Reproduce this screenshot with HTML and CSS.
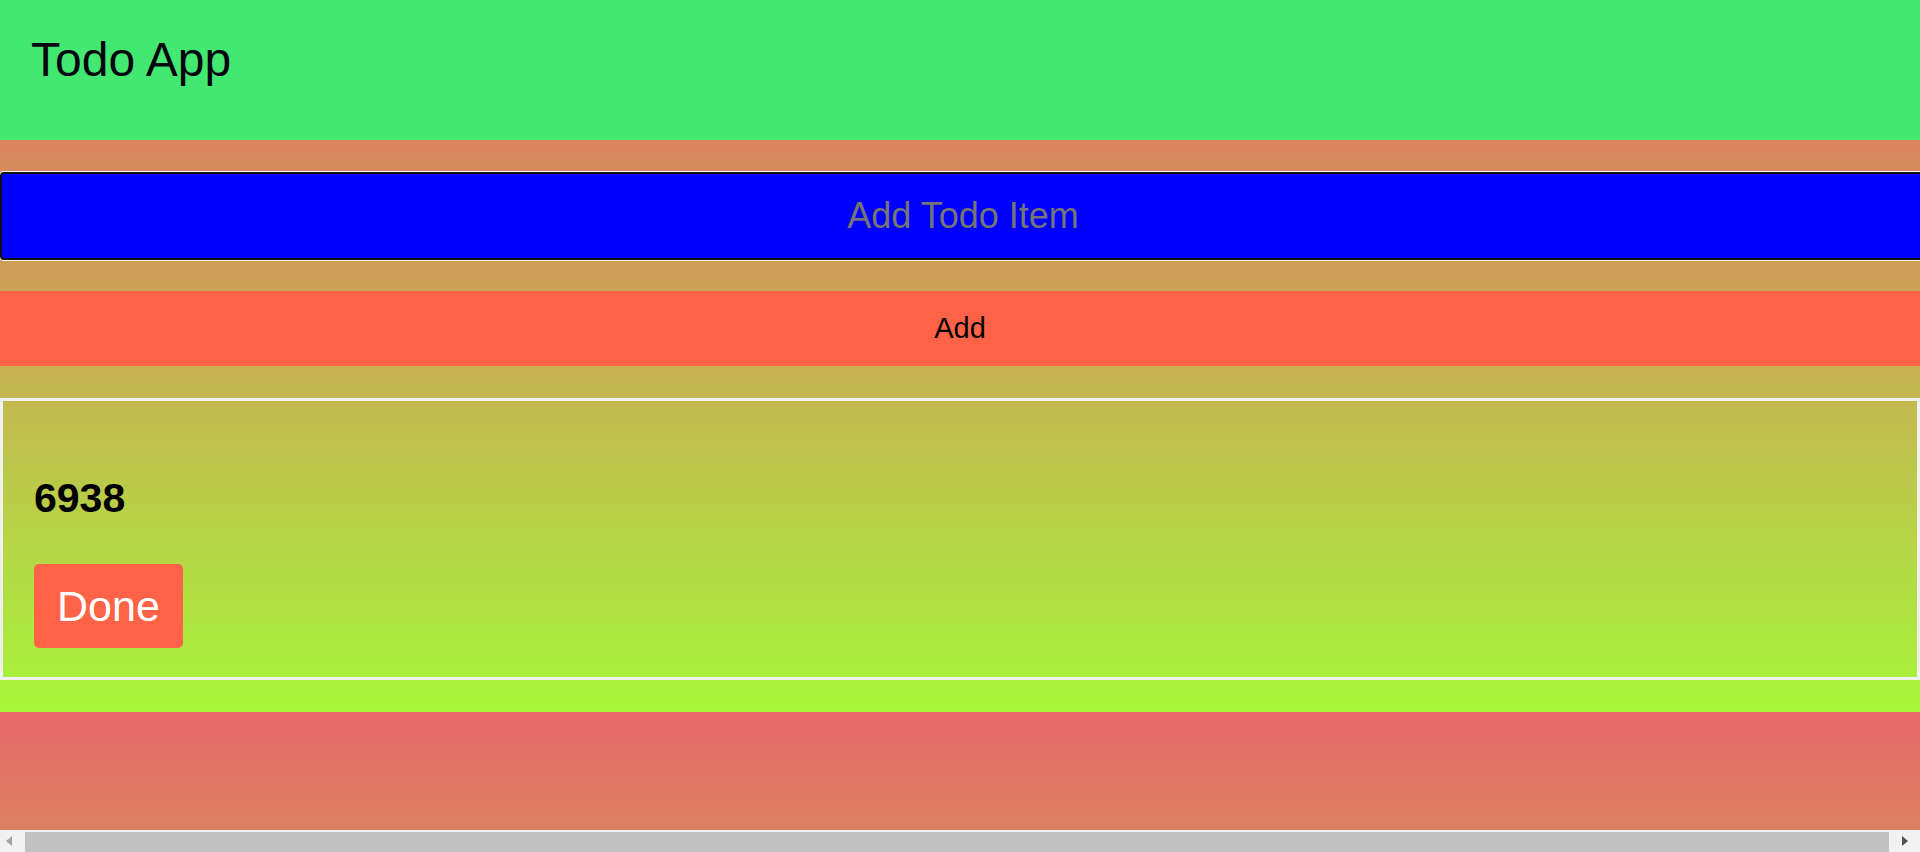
FILE: index.html
```html
<!DOCTYPE html>
<html lang="en">
<head>
<meta charset="utf-8">
<title>Todo App</title>
<link rel="stylesheet" href="styles.css">
</head>
<body>
<header class="app-header">
  <h1 class="app-title">Todo App</h1>
</header>
<main class="app">
  <input class="todo-input" type="text" placeholder="Add Todo Item">
  <button class="add-btn" type="button">Add</button>
  <section class="todo-card">
    <h2 class="todo-text">6938</h2>
    <button class="done-btn" type="button">Done</button>
  </section>
</main>
<div class="hscroll" aria-hidden="true">
  <span class="hscroll-btn hscroll-left"></span>
  <span class="hscroll-track"><span class="hscroll-thumb"></span></span>
  <span class="hscroll-btn hscroll-right"></span>
</div>
</body>
</html>
```

FILE: styles.css
```css
body {
  margin: 0;
  font-family: "Liberation Sans", Arial, sans-serif;
  background: linear-gradient(to bottom, #e76969, #a6f73a);
}

.app-header {
  background: #42e86f;
  height: 140px;
  box-sizing: border-box;
  padding: 32px 31px 0;
}

.app-title {
  margin: 0;
  font-size: 48px;
  line-height: 55px;
  font-weight: normal;
  color: #05050f;
}

.app {
  padding-bottom: 32px;
}

.todo-input {
  display: block;
  box-sizing: content-box;
  width: 100%;
  height: 84px;
  padding: 0 1px;
  margin: 32px 0 0;
  border: 2px solid #101010;
  border-radius: 4px;
  box-shadow: 0 0 0 1px #ffffff;
  background: #0000ff;
  color: #ffffff;
  font-family: "Liberation Sans", Arial, sans-serif;
  font-size: 36px;
  text-align: center;
  outline: none;
}

.todo-input::placeholder {
  color: #757575;
  opacity: 1;
}

.add-btn {
  display: block;
  width: 100%;
  height: 75px;
  margin: 31px 0 0;
  padding: 0;
  border: 0;
  background: #ff6347;
  color: #000000;
  font-family: "Liberation Sans", Arial, sans-serif;
  font-size: 29px;
}

.todo-card {
  margin-top: 32px;
  border: 3px solid #f0f0f0;
  padding: 74px 31px 29px;
}

.todo-text {
  margin: 0 0 43px;
  font-size: 41px;
  line-height: 46px;
  font-weight: bold;
  color: #000000;
}

.done-btn {
  display: block;
  border: 0;
  border-radius: 5px;
  padding: 18px 23px;
  background: #ff6347;
  color: #ffffff;
  font-family: "Liberation Sans", Arial, sans-serif;
  font-size: 43px;
  line-height: 48px;
}

/* browser horizontal scrollbar overlay */
.hscroll {
  position: fixed;
  left: 0;
  right: 0;
  bottom: 0;
  height: 22px;
  display: flex;
  background: #f1f1f1;
}

.hscroll-btn {
  width: 25px;
  height: 22px;
  display: flex;
  align-items: center;
  justify-content: center;
  flex: none;
}

.hscroll-btn::before {
  content: "";
  width: 0;
  height: 0;
  border-top: 5px solid transparent;
  border-bottom: 5px solid transparent;
}

.hscroll-left {
  padding-right: 13px;
  box-sizing: border-box;
  justify-content: flex-end;
}

.hscroll-left::before {
  border-right: 6px solid #a3a3a3;
}

.hscroll-right {
  width: 31px;
}

.hscroll-right::before {
  border-left: 6px solid #505050;
}

.hscroll-track {
  flex: 1;
  display: flex;
  padding-top: 2px;
}

.hscroll-thumb {
  flex: 1;
  background: #c1c1c1;
}
```
